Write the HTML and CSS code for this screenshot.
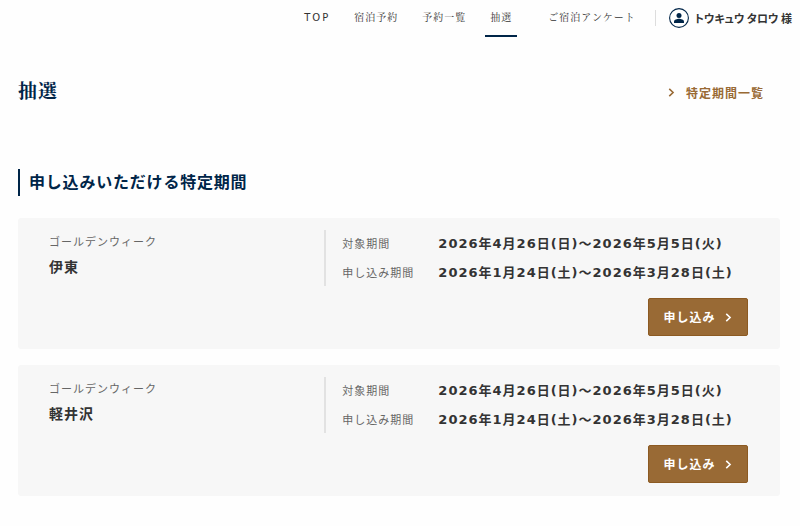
FILE: index.html
```html
<!DOCTYPE html>
<html lang="ja">
  <head>
    <meta charset="UTF-8" />
    <meta name="viewport" content="width=device-width, initial-scale=1.0" />
    <title>抽選</title>
    <link rel="stylesheet" href="styles.css">
  </head>
  <body>
    <header class="header">
      <nav class="nav">
        <a class="nav-link nav-top" href="#">TOP</a>
        <a class="nav-link" href="#">宿泊予約</a>
        <a class="nav-link" href="#">予約一覧</a>
        <a class="nav-link active" href="#">抽選</a>
        <a class="nav-link nav-survey" href="#">ご宿泊アンケート</a>
      </nav>
      <a class="user" href="#">
        <svg class="user-icon" viewBox="0 0 20 20" aria-hidden="true">
          <circle cx="10" cy="10" r="9.4" fill="#fff" stroke="#002548" stroke-width="1.1" />
          <circle cx="10" cy="7.6" r="2.5" fill="#002548" />
          <path d="M5 15v-1.4c0-1.8 3.2-2.8 5-2.8s5 1 5 2.8V15z" fill="#002548" />
        </svg>
        <span class="user-name">トウキュウ タロウ 様</span>
      </a>
    </header>

    <main class="main">
      <div class="page-title">
        <h1>抽選</h1>
        <a class="list-link" href="#">
          <svg class="arrow" viewBox="0 0 8 8" aria-hidden="true"><path d="M2 .8l3.4 3.2L2 7.2" /></svg>
          特定期間一覧
        </a>
      </div>

      <h2>申し込みいただける特定期間</h2>

      <section class="card">
        <div class="card-body">
          <div class="card-name">
            <p>ゴールデンウィーク</p>
            <h3>伊東</h3>
          </div>
          <dl class="periods">
            <dt>対象期間</dt>
            <dd>2026年4月26日(日)～2026年5月5日(火)</dd>
            <dt>申し込み期間</dt>
            <dd>2026年1月24日(土)～2026年3月28日(土)</dd>
          </dl>
        </div>
        <button type="button" class="btn">
          申し込み
          <svg class="arrow" viewBox="0 0 8 8" aria-hidden="true"><path d="M2 .8l3.4 3.2L2 7.2" /></svg>
        </button>
      </section>

      <section class="card">
        <div class="card-body">
          <div class="card-name">
            <p>ゴールデンウィーク</p>
            <h3>軽井沢</h3>
          </div>
          <dl class="periods">
            <dt>対象期間</dt>
            <dd>2026年4月26日(日)～2026年5月5日(火)</dd>
            <dt>申し込み期間</dt>
            <dd>2026年1月24日(土)～2026年3月28日(土)</dd>
          </dl>
        </div>
        <button type="button" class="btn">
          申し込み
          <svg class="arrow" viewBox="0 0 8 8" aria-hidden="true"><path d="M2 .8l3.4 3.2L2 7.2" /></svg>
        </button>
      </section>
    </main>
  </body>
</html>
```

FILE: styles.css
```css
* {
  box-sizing: border-box;
}
body {
  margin: 0;
  font-family: "Noto Sans CJK JP", sans-serif;
  font-size: 12px;
  letter-spacing: 1px;
  color: #333;
  background-color: #fefefe;
}
h1,
h2,
h3,
p,
dl,
dd {
  margin: 0;
}
a {
  color: inherit;
  text-decoration: none;
}

/* header */
.header {
  display: flex;
  justify-content: flex-end;
  align-items: flex-start;
  padding-right: 8px;
}
.nav {
  display: flex;
  gap: 14px;
}
.nav-link {
  padding: 0 5px;
  border-bottom: 2px solid transparent;
  font-family: "Liberation Serif", "Noto Serif CJK JP", "Noto Sans CJK JP", serif;
  font-size: 10px;
  line-height: 35px;
  white-space: nowrap;
}
.nav-top {
  font-family: "DejaVu Sans", sans-serif;
  letter-spacing: 2px;
}
.nav-link.active {
  border-bottom-color: #002548;
}
.nav-survey {
  margin-left: 12px;
}
.user {
  display: flex;
  align-items: center;
  gap: 6px;
  height: 16px;
  margin: 10px 0 0 14px;
  padding-left: 13px;
  border-left: 1px solid #ddd;
}
.user-icon {
  width: 20px;
  height: 20px;
}
.user-name {
  font-size: 11px;
  font-weight: bold;
  font-feature-settings: "palt";
  letter-spacing: 0;
  line-height: 14px;
  white-space: nowrap;
}

/* title */
.main {
  padding: 0 20px 30px 18px;
}
.page-title {
  display: flex;
  justify-content: space-between;
  align-items: center;
  margin: 40px 0 62px;
  padding-right: 16px;
}
h1 {
  font-family: "Liberation Serif", "Noto Serif CJK JP", "Noto Sans CJK JP", serif;
  font-size: 19px;
  font-weight: bold;
  line-height: 30px;
  color: #002548;
}
.list-link {
  display: flex;
  align-items: center;
  gap: 10px;
  font-weight: bold;
  color: #996a35;
}
.arrow {
  width: 9px;
  height: 9px;
  fill: none;
  stroke: currentColor;
  stroke-width: 1.4;
}
h2 {
  margin-bottom: 22px;
  padding: 0 0 2px 9px;
  border-left: 2px solid #002548;
  font-size: 16px;
  line-height: 25px;
  letter-spacing: 0.05em;
  color: #002548;
}

/* cards */
.card {
  display: flex;
  flex-direction: column;
  align-items: flex-end;
  gap: 12px;
  margin-bottom: 16px;
  padding: 12px 32px 13px 31px;
  border-radius: 3px;
  background-color: #f7f7f7;
}
.card-body {
  display: grid;
  grid-template-columns: 13fr 20fr;
  width: 100%;
}
.card-name p {
  font-size: 11px;
  line-height: 22px;
  color: #666;
}
.card-name h3 {
  font-size: 14px;
  line-height: 28px;
}
.periods {
  display: grid;
  grid-template-columns: 96px 1fr;
  row-gap: 2px;
  padding-left: 16px;
  border-left: 2px solid #e2e2e2;
  line-height: 27px;
  white-space: nowrap;
}
.periods dt {
  font-size: 11px;
  color: #666;
}
.periods dd {
  font-family: "DejaVu Sans", "Noto Sans CJK JP", sans-serif;
  font-size: 13px;
  font-weight: bold;
}
.btn {
  display: flex;
  justify-content: center;
  align-items: center;
  gap: 8px;
  min-width: 100px;
  height: 38px;
  padding: 0 14px;
  border: 1px solid #8c5a22;
  border-radius: 2px;
  background-color: #996a35;
  color: #fff;
  font-family: inherit;
  font-size: 12px;
  font-weight: bold;
  letter-spacing: 1px;
  line-height: 16px;
  cursor: pointer;
}
.btn:hover {
  background-color: #86592a;
}
```
